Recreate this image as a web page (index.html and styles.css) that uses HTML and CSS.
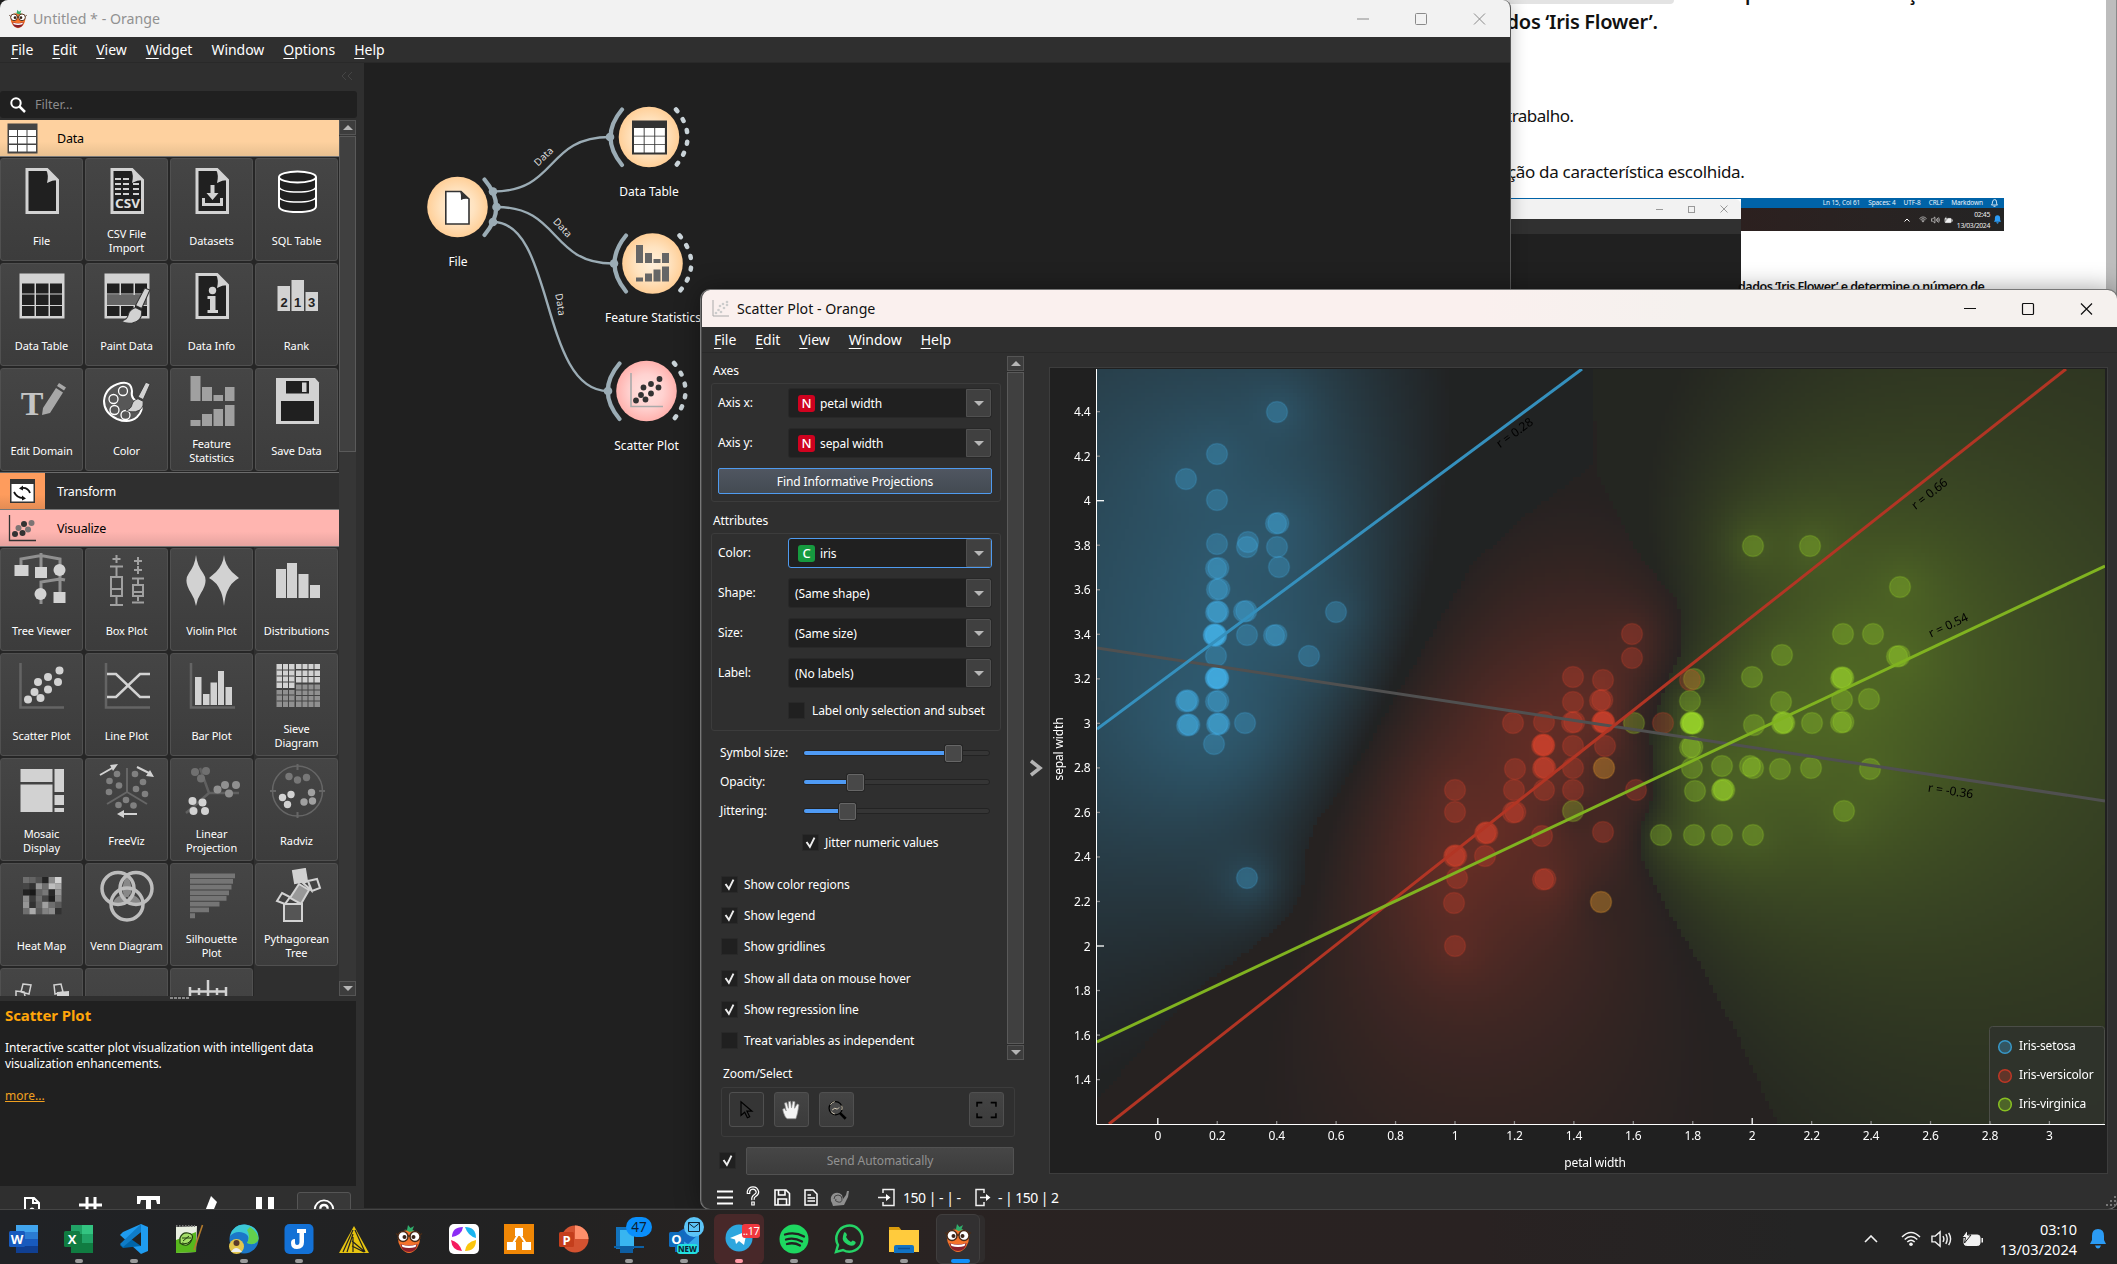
FILE: index.html
```html
<!DOCTYPE html>
<html lang="en">
<head>
<meta charset="utf-8">
<title>Orange</title>
<link rel="stylesheet" href="styles.css">
</head>
<body>
<svg class="defs" width="0" height="0">
  <defs>
    <radialGradient id="gOrange"><stop offset="0" stop-color="#fff0dc"/><stop offset=".55" stop-color="#ffe3c0"/><stop offset="1" stop-color="#ffcf98"/></radialGradient>
    <radialGradient id="gPink"><stop offset="0" stop-color="#ffe2e0"/><stop offset=".55" stop-color="#ffd2d0"/><stop offset="1" stop-color="#ffb2ae"/></radialGradient>
  </defs>
  <symbol id="logo" viewBox="0 0 30 30">
    <path d="M5 9Q15 3 25 9Q28 16 23 24Q15 34 7 24Q2 16 5 9Z" fill="#f4722b"/>
    <path d="M10 5l3 1 1-5 2.500 3 3.500-2-1.500 4 2 1-5 1z" fill="#2fae6b"/>
    <circle cx="9" cy="12.500" r="5" fill="#fff" stroke="#4a2c18" stroke-width="1.400"/><circle cx="21" cy="12.500" r="5" fill="#fff" stroke="#4a2c18" stroke-width="1.400"/>
    <path d="M2 9.500l2 1.500M28 9.500l-2 1.500M13.500 12h3" stroke="#4a2c18" stroke-width="1.400"/>
    <circle cx="10.500" cy="13" r="2" fill="#3a2418"/><circle cx="19.500" cy="13" r="2" fill="#3a2418"/>
    <path d="M6.500 20Q15 22.500 23.500 20Q22 28 15 28Q8 28 6.500 20Z" fill="#8c1f2a"/><path d="M7.500 20.600Q15 23 22.500 20.600L21.500 23Q15 25 8.500 23Z" fill="#fff"/>
  </symbol>
  <symbol id="page" viewBox="0 0 56 56"><path d="M13 6.500H33L43.500 17V49.500H13Z" fill="#202020" stroke="#d2d2d2" stroke-width="3"/><path d="M32 6L44 17Q38 17 33 20Q35 12 32 6Z" fill="#d2d2d2"/></symbol>
  <symbol id="grid" viewBox="0 0 56 56"><path d="M5.500 5.500H50.500V50.500H5.500Z" fill="#d2d2d2"/><path d="M8 15.500h12.500v10H8zM22 15.500h12.500v10H22zM36 15.500h12v10H36zM8 26.500h12.500v10.500H8zM22 26.500h12.500v10.500H22zM36 26.500h12v10.500H36zM8 38h12.500v10H8zM22 38h12.500v10H22zM36 38h12v10H36z" fill="#202020"/></symbol>
  <symbol id="brush" viewBox="0 0 30 36"><path d="M24 1l5 2-8 18-6-3z" fill="#d2d2d2" stroke="#333"/><path d="M15 20l6 3Q22 33 12 35Q5 36 1 33Q7 32 8 27Q9 22 15 20Z" fill="#d2d2d2" stroke="#333"/></symbol>
  <symbol id="chk" viewBox="0 0 17 17"><path d="M4 8l3.800 5.500L13 3" fill="none" stroke="#ededed" stroke-width="2.200"/></symbol>
  <symbol id="bell" viewBox="0 0 16 20"><path d="M8 0Q14 0 14 7V11L16 15H0L2 11V7Q2 0 8 0Z" fill="#2b9bf4"/><path d="M5 16.500h6Q10 19.500 8 19.500T5 16.500Z" fill="#2b9bf4"/></symbol>
  <symbol id="wifi" viewBox="0 0 20 16"><g fill="none" stroke="#f2f2f2" stroke-width="1.500"><path d="M1 6Q10-3 19 6M3.700 8.500Q10 2.500 16.300 8.500M6.300 11Q10 7.500 13.700 11"/></g><circle cx="10" cy="13.300" r="1.800" fill="#f2f2f2"/></symbol>
  <symbol id="vol" viewBox="0 0 22 18"><g fill="none" stroke="#f2f2f2" stroke-width="1.500"><path d="M1 6h3.500l5-4.500v15l-5-4.500H1zM12.500 6Q14.500 9 12.500 12M15.500 4Q18.500 9 15.500 14M18.500 2.500Q22.500 9 18.500 15.500"/></g></symbol>
  <symbol id="batt" viewBox="0 0 22 18"><rect x="2" y="5" width="16" height="10.500" rx="2.500" fill="#f2f2f2" stroke="#f2f2f2"/><path d="M19.500 8h1.500v4.500h-1.500" fill="#f2f2f2"/><path d="M5.500 0L0 7.500h3.500L2.500 13L9 5H5.500z" fill="#f2f2f2" stroke="#222"/></symbol>
</svg>

<div class="desktop">
  <!-- browser page behind the windows -->
  <section class="doc">
    <div class="doc-page">
      <p class="cut"><span class="pill"></span><b>p</b><b>ç</b></p>
      <p class="h">dados ‘Iris Flower’.</p>
      <p class="t1">trabalho.</p>
      <p class="t2">ção da característica escolhida.</p>
      <div class="shot">
        <div class="mini">
          <div class="mini-title"><i class="m-min"></i><i class="m-max"></i><svg width="8" height="8" viewBox="0 0 8 8"><path d="M.5.5l7 7M7.500.5l-7 7" stroke="#999"/></svg></div>
          <div class="mini-menu"></div>
          <div class="mini-body"></div>
        </div>
        <div class="mini-vs"><span>Ln 15, Col 61</span><span>Spaces: 4</span><span>UTF-8</span><span>CRLF</span><span>Markdown</span><svg width="7" height="8" viewBox="0 0 7 8"><path d="M.5 6Q1.500 5 1.500 3T3.500.6T5.500 3T6.500 6ZM2.500 7.300h2" fill="none" stroke="#fff" stroke-width=".8"/></svg></div>
        <div class="mini-bar"><svg width="6" height="4" viewBox="0 0 6 4"><path d="M.5 3.500L3 1l2.500 2.500" fill="none" stroke="#fff"/></svg><svg class="mw" width="8" height="7"><use href="#wifi"/></svg><svg width="9" height="8"><use href="#vol"/></svg><svg width="9" height="8"><use href="#batt"/></svg><span>02:45<br>13/03/2024</span><svg width="7" height="9"><use href="#bell"/></svg></div>
      </div>
      <p class="t3">dados ‘Iris Flower’ e determine o número de</p>
    </div>
    <div class="doc-scroll"></div>
  </section>

  <!-- main Orange window -->
  <section class="win main">
    <header class="title"><svg width="20" height="20"><use href="#logo"/></svg><span>Untitled * - Orange</span>
      <svg class="wctl" width="130" height="14" viewBox="0 0 130 14"><path d="M1 7h12M118 1.500l11 11M129 1.500l-11 11" stroke="#8a8a8a" fill="none"/><rect x="59.500" y="1.500" width="11" height="11" rx="1" fill="none" stroke="#8a8a8a"/></svg></header>
    <nav class="menu"><span><u>F</u>ile</span><span><u>E</u>dit</span><span><u>V</u>iew</span><span><u>W</u>idget</span><span>Window</span><span><u>O</u>ptions</span><span><u>H</u>elp</span></nav>
    <div class="work">
      <aside class="side">
        <div class="collapse"><svg width="12" height="8" viewBox="0 0 12 8"><path d="M5 0L1 4l4 4M11 0L7 4l4 4" fill="none" stroke="#454545"/></svg></div>
        <div class="filter"><svg width="16" height="16" viewBox="0 0 16 16"><circle cx="6" cy="6" r="4.700" fill="none" stroke="#fff" stroke-width="2"/><path d="M9.500 9.500l5.500 5.500" stroke="#fff" stroke-width="2.500"/></svg><span>Filter...</span></div>
        <div class="box">
          <div class="list">
            <div class="cat data"><svg width="31" height="31" viewBox="0 0 31 31"><path d="M.5.5h30v30H.5z" fill="#444"/><path d="M2 7h8v6H2zM11 7h8.500v6H11zM20.500 7h8.500v6h-8.500zM2 14h8v6.500H2zM11 14h8.500v6.500H11zM20.500 14h8.500v6.500h-8.500zM2 22h8v6.500H2zM11 22h8.500v6.500H11zM20.500 22h8.500v6.500h-8.500z" fill="#fff"/></svg><span>Data</span></div>
            <div class="tiles">
              <div class="tile"><svg><use href="#page"/></svg><p>File</p></div>
              <div class="tile"><svg viewBox="0 0 56 56"><use href="#page"/><path d="M16 16h6M24 16h6M34 16h6M16 21h6M24 21h6M34 21h6M16 26h6M24 26h6M34 26h6M16 31h6M24 31h6M34 31h6" stroke="#d2d2d2" stroke-width="2"/><text x="28.500" y="45" class="ic-t" font-size="12" textLength="25" lengthAdjust="spacingAndGlyphs">CSV</text></svg><p>CSV File<br>Import</p></div>
              <div class="tile"><svg viewBox="0 0 56 56"><use href="#page"/><path d="M26.500 22h4v8h4L28.500 37 22.500 30h4zM18 35h3v5h15v-5h3v8H18z" fill="#d2d2d2"/></svg><p>Datasets</p></div>
              <div class="tile"><svg viewBox="0 0 56 56"><path d="M10 14V43Q10 49 28.500 49T47 43V14" fill="#202020" stroke="#fff" stroke-width="2"/><ellipse cx="28.500" cy="14" rx="18.500" ry="5.500" fill="#202020" stroke="#fff" stroke-width="2"/><path d="M10 24Q12 29 28.500 29T47 24M10 34Q12 39 28.500 39T47 34" fill="none" stroke="#fff" stroke-width="1.500"/></svg><p>SQL Table</p></div>
              <div class="tile"><svg><use href="#grid"/></svg><p>Data Table</p></div>
              <div class="tile"><svg viewBox="0 0 56 56"><use href="#grid"/><path d="M8 27h40v10H8z" fill="#666"/><use href="#brush" x="21" y="19" width="31" height="37"/></svg><p>Paint Data</p></div>
              <div class="tile"><svg viewBox="0 0 56 56"><use href="#page"/><circle cx="28.500" cy="22.500" r="3.700" fill="#d2d2d2"/><path d="M23.500 28h8v14h2.500v3H23.500v-3h2.500V31h-2.500z" fill="#d2d2d2"/></svg><p>Data Info</p></div>
              <div class="tile"><svg viewBox="0 0 56 56"><path d="M8.500 18h12.500v25H8.500zM22.500 12h12.500v31H22.500zM36.500 24h12.500v19H36.500z" fill="#d2d2d2"/><g class="rk"><text x="15" y="39">2</text><text x="28.500" y="39">1</text><text x="42.500" y="39">3</text></g></svg><p>Rank</p></div>
              <div class="tile"><svg viewBox="0 0 56 56"><text x="18" y="42" class="ic-s" font-size="34">T</text><path d="M29 35L42 15l7 4.500L36 40l-8 2zM43 13l2-3 7 4.500-2 3z" fill="#a8a8a8"/></svg><p>Edit Domain</p></div>
              <div class="tile"><svg viewBox="0 0 56 56"><path d="M22 10Q32 8 33 18Q31 27 42 30Q45 37 38 44Q30 51 18 46Q5 40 5 28Q6 14 22 10Z" fill="#575757" stroke="#fff" stroke-width="2"/><g fill="none" stroke="#fff" stroke-width="1.300"><circle cx="24" cy="18" r="4.500"/><circle cx="14.500" cy="26" r="4.500"/><circle cx="15.500" cy="37" r="4.500"/><circle cx="26.500" cy="42" r="4.500"/></g><use href="#brush" x="26" y="7" width="26" height="34"/></svg><p>Color</p></div>
              <div class="tile"><svg viewBox="0 0 56 56"><path d="M6.500 3h10v25h-10zM18 14h10v14H18zM29.500 22h9.500v6h-9.500zM41 14h9.500v14H41zM6.500 47h10v6h-10zM18 41h10v12H18zM29.500 36h9.500v17h-9.500zM41 32h9.500v21H41z" fill="#a0a0a0"/></svg><p>Feature<br>Statistics</p></div>
              <div class="tile"><svg viewBox="0 0 56 56"><path d="M7 5H46L50 9.500V51H7Z" fill="#d2d2d2"/><path d="M17 8h23v12.500H17zM12 28h33v20H12z" fill="#202020"/><path d="M33 9.500h4.500v9.500H33z" fill="#d2d2d2"/></svg><p>Save Data</p></div>
            </div>
            <div class="cat trans"><i><svg width="25" height="24" viewBox="0 0 25 24"><path d="M0 0h25v24H0z" fill="#333"/><path d="M1.500 5h22v17.500h-22z" fill="#fff"/><path d="M4 13q3 6 9 6M20 14q-2-6-9-5" fill="none" stroke="#111" stroke-width="1.800"/><path d="M13 6.500v5L9 9.500zM12 16.500v5l4-2z" fill="#111"/></svg></i><span>Transform</span></div>
            <div class="cat vis"><svg width="28" height="28" viewBox="0 0 28 28"><path d="M1.500 1v25.500H28" fill="none" stroke="#333" stroke-width="1.300"/><g fill="#333"><circle cx="7" cy="20" r="3"/><circle cx="14.500" cy="19" r="3"/><circle cx="16" cy="10" r="3"/></g><g fill="#7d7474"><circle cx="10.500" cy="14" r="3"/><circle cx="20" cy="15.500" r="3"/><circle cx="23.500" cy="9" r="3"/></g></svg><span>Visualize</span></div>
            <div class="tiles b">
              <div class="tile"><svg viewBox="0 0 56 56"><path d="M7 14V6L27 2.500 46 6V47M27 0V20M27 51V29L46 26l5 1" fill="none" stroke="#909090" stroke-width="3"/><path d="M.5 12h14v11H.5zM21 14h12v11H21zM39.500 39h12v11h-12z" fill="#d2d2d2"/><circle cx="45.500" cy="17" r="6" fill="#d2d2d2"/><circle cx="26.500" cy="41" r="6" fill="#d2d2d2"/></svg><p>Tree Viewer</p></div>
              <div class="tile"><svg viewBox="0 0 56 56"><g fill="none" stroke="#a0a0a0" stroke-width="2"><path d="M17.500 2v8M13.500 6h8M39 4v8M35 8h8M39 13v8M35 17h8M11 13.500h13M17.500 14v10M12 24h11v19H12zM12 36h11M17.500 43v8M11 52h13M33 25.500h12M39 26v6M34 32h10v11H34zM34 39h10M39 43v5M33 49.500h12"/></g></svg><p>Box Plot</p></div>
              <div class="tile"><svg viewBox="0 0 56 56"><path d="M12 2Q13 12 19 20Q25 28 17 40Q13 46 12 53Q11 46 7 40Q-1 28 5 20Q11 12 12 2ZM40 2Q41 12 48 19L55 25Q47 29 43 39Q41 44 40 53Q39 44 37 39Q33 29 25 25L32 19Q39 12 40 2Z" fill="#d2d2d2"/></svg><p>Violin Plot</p></div>
              <div class="tile"><svg viewBox="0 0 56 56"><path d="M7 16h10v29H7zM18 10h10v35H18zM29.500 21h10v24h-10zM41 32h10v13H41z" fill="#d2d2d2"/></svg><p>Distributions</p></div>
              <div class="tile"><svg viewBox="0 0 56 56"><path d="M6.500 5v44.500H50" fill="none" stroke="#646464" stroke-width="2.500"/><g fill="#d2d2d2"><circle cx="14" cy="41.500" r="4"/><circle cx="20.500" cy="34" r="4"/><circle cx="26.500" cy="40" r="4"/><circle cx="24" cy="24" r="4"/><circle cx="34" cy="31.500" r="4"/><circle cx="34" cy="19" r="4"/><circle cx="44" cy="24" r="4"/><circle cx="45.500" cy="12.500" r="4"/></g></svg><p>Scatter Plot</p></div>
              <div class="tile"><svg viewBox="0 0 56 56"><path d="M7 5v44.500H51" fill="none" stroke="#646464" stroke-width="2.500"/><path d="M8 16h9L41 39h10M8 39h9L41 16h10" fill="none" stroke="#d2d2d2" stroke-width="2.500"/></svg><p>Line Plot</p></div>
              <div class="tile"><svg viewBox="0 0 56 56"><path d="M7 5v44.500H51" fill="none" stroke="#646464" stroke-width="2.500"/><path d="M11 19h6.500v28H11zM19 36h6.500v11H19zM26.500 24.500H33v22.500h-6.500zM34 13h6v34h-6zM41.500 29H48v18h-6.500z" fill="#d2d2d2"/></svg><p>Bar Plot</p></div>
              <div class="tile"><svg viewBox="0 0 56 56"><path d="M7.500 6h18v24h-18zM27 6h24v5H27zM27 12.500h24v12H27z" fill="#d2d2d2"/><path d="M7.500 32h18v17h-18zM27 26.500h24v22.500H27z" fill="#909090"/><path d="M13.500 6v43M19.500 6v43M33 6v43M39 6v43M45 6v43M7.500 12h18M7.500 18h18M7.500 24h18M7.500 37h18M7.500 43h18M27 18.500h24M27 32h24M27 37.500h24M27 43h24" stroke="#444"/></svg><p>Sieve<br>Diagram</p></div>
              <div class="tile"><svg viewBox="0 0 56 56"><path d="M6.500 6h32v13h-32zM6.500 21.500h32V49h-32zM40.500 6H50v23h-9.500zM40.500 32H50v10h-9.500zM40.500 45H50v4h-9.500z" fill="#d2d2d2"/></svg><p>Mosaic<br>Display</p></div>
              <div class="tile"><svg viewBox="0 0 56 56"><path d="M28 5v24L8 41M28 29l20 12" fill="none" stroke="#666" stroke-width="2"/><g fill="#808080"><circle cx="18" cy="11" r="3.300"/><circle cx="10.500" cy="18" r="3.300"/><circle cx="20" cy="22.500" r="3.300"/><circle cx="10" cy="29" r="3.300"/><circle cx="36" cy="11" r="3.300"/><circle cx="44" cy="19" r="3.300"/><circle cx="37" cy="26" r="3.300"/><circle cx="46" cy="31" r="3.300"/><circle cx="27" cy="37" r="3.300"/><circle cx="19.500" cy="42" r="3.300"/><circle cx="34.500" cy="42.500" r="3.300"/></g><path d="M1 12L15 4M38 4l14 7M38 51H22" stroke="#d2d2d2" stroke-width="2"/><path d="M11 2l8-1-5 7zM55 14l-8-1 4-6zM18 51l7-4v8z" fill="#d2d2d2"/></svg><p>FreeViz</p></div>
              <div class="tile"><svg viewBox="0 0 56 56"><path d="M16 5l9 25h30M25 30L2 50" fill="none" stroke="#606060" stroke-width="2.500"/><g fill="#707070"><circle cx="11" cy="9" r="4"/><circle cx="22" cy="8" r="4"/><circle cx="17" cy="15.500" r="4"/></g><g fill="#909090"><circle cx="33.500" cy="26.500" r="4"/><circle cx="41" cy="22" r="4"/><circle cx="52" cy="22" r="4"/><circle cx="45" cy="30.500" r="4"/></g><g fill="#d2d2d2"><circle cx="8.500" cy="38" r="4"/><circle cx="18.500" cy="39.500" r="4"/><circle cx="9.500" cy="48" r="4"/><circle cx="21" cy="48" r="4"/></g></svg><p>Linear<br>Projection</p></div>
              <div class="tile"><svg viewBox="0 0 56 56"><circle cx="28.500" cy="28" r="25" fill="none" stroke="#666" stroke-width="1.500"/><path d="M28.500 1v6M28.500 49v6M1 28h6M50 28h6" stroke="#666" stroke-width="2"/><g fill="#777"><circle cx="20" cy="13.500" r="3.700"/><circle cx="28.500" cy="17" r="3.700"/><circle cx="37.500" cy="14.500" r="3.700"/></g><g fill="#a0a0a0"><circle cx="42.500" cy="29.500" r="3.700"/><circle cx="35" cy="39" r="3.700"/><circle cx="43.500" cy="38" r="3.700"/></g><g fill="#d2d2d2"><circle cx="13.500" cy="34.500" r="3.700"/><circle cx="22" cy="31.500" r="3.700"/><circle cx="18.500" cy="41.500" r="3.700"/></g></svg><p>Radviz</p></div>
              <div class="tile"><svg viewBox="0 0 56 56" id="heat"></svg><p>Heat Map</p></div>
              <div class="tile"><svg viewBox="0 0 56 56"><path d="M28 8q7 10 3 20q-3 2-6 0q-4-10 3-20zM14 34q3-6 11-8q4 5 2 10q-7 3-13-2zM42 34q-3-6-11-8q-4 5-2 10q7 3 13-2z" fill="#888"/><g fill="none" stroke="#bdbdbd" stroke-width="3.500"><circle cx="19" cy="20.500" r="16"/><circle cx="37" cy="20.500" r="16"/><circle cx="28" cy="36" r="16"/></g></svg><p>Venn Diagram</p></div>
              <div class="tile"><svg viewBox="0 0 56 56"><path d="M6 5.500h45v4.800H6zM6 11h43v4.800H6zM6 16.700h41.500v4.800H6zM6 22.400h39v4.800H6zM6 28h36.500v4.800H6zM6 33.800h29.500v4.800H6zM6 39.500h19v4.800H6zM6 45.200h5v5H6z" fill="#757575"/></svg><p>Silhouette<br>Plot</p></div>
              <div class="tile"><svg viewBox="0 0 56 56"><g stroke="#d2d2d2" stroke-width="2"><path d="M15 36h18v17H15z" fill="#555"/><path d="M30 16l10 6-8 14-11-6z" fill="#999"/><path d="M24 3l12-2 2 12-12 2z" fill="#d2d2d2"/><g fill="none"><path d="M13 25l8 4-5 7-8-3zM39 13l9-2 3 9-8 3zM34 15l5-2 3 9z"/></g></g></svg><p>Pythagorean<br>Tree</p></div>
              <div class="tile"><svg viewBox="0 0 56 56"><g fill="none" stroke="#d2d2d2" stroke-width="1.500"><path d="M9 11l8 1-2 9-8-2zM2 27v-9l8 1 2 8M40 12l7-1 2 8-8 2z"/></g><path d="M43 19l12-1v10H43z" fill="#d2d2d2"/></svg></div>
              <div class="tile"></div>
              <div class="tile"><svg viewBox="0 0 56 56"><path d="M24 7v20M6 14v12M42 14v12M6 18.500h36M15 15v7M33 15v7" stroke="#d2d2d2" stroke-width="2.500" fill="none"/></svg></div>
            </div>
          </div>
          <div class="sb"><i class="up"></i><div class="track"><div class="thumb"></div></div><i class="dn"></i></div>
        </div>
        <div class="split"><i></i></div>
        <div class="info"><h3>Scatter Plot</h3><p>Interactive scatter plot visualization with intelligent data<br>visualization enhancements.</p><a>more...</a></div>
        <div class="tools">
          <svg viewBox="0 0 54 26"><path d="M21 8h9l5 5v15H21zM29 8v5h6" fill="none" stroke="#fff" stroke-width="2"/><circle cx="28" cy="20" r="2.500" fill="#fff"/></svg>
          <svg viewBox="0 0 54 26"><path d="M24 7v20M32 7v20M16 15h23" stroke="#fff" stroke-width="3"/></svg>
          <svg viewBox="0 0 54 26"><path d="M16 6h23v8h-3l-1-4h-5v20h-5V10h-5l-1 4h-3z" fill="#fff"/></svg>
          <svg viewBox="0 0 54 26"><path d="M24 24L31 6l6 6-6 14z" fill="#fff"/></svg>
          <svg viewBox="0 0 54 26"><path d="M18 7h6v20H18zM30 7h6v20h-6z" fill="#fff"/></svg>
          <svg class="on" viewBox="0 0 54 26"><circle cx="27" cy="18" r="10" fill="none" stroke="#fff" stroke-width="2"/><path d="M23 17q0-4 4-4t4 4" fill="none" stroke="#fff" stroke-width="2.500"/></svg>
        </div>
      </aside>
      <svg class="flow" width="1146" height="1145" viewBox="364 63 1146 1145">
        <g fill="none" stroke="#9bacb5" stroke-width="2.400"><path d="M493 191.500C558 191.500 545 137 610 137M497 207C560 207 550 263.500 613 263.500M493 222C555 222 540 391 608 391"/></g>
        <g fill="none" stroke="#9bacb5" stroke-width="4.200" stroke-linecap="round"><path d="M484.500 179.500Q508 207 484.500 235M622 109.500Q599 137 622 165M626 235.500Q603 263.500 626 291.500M619.500 363.500Q596 391 619.500 419"/></g>
        <g fill="none" stroke="#c9d3d8" stroke-width="4.500" stroke-linecap="round" stroke-dasharray="2 9.700"><path d="M676 109.500Q699 137 676 165.500M679.500 235.500Q703 263.500 679.500 291.500M674 363Q697 391 674 419"/></g>
        <g fill="#9bacb5"><circle cx="493" cy="191.500" r="4.300"/><circle cx="496.500" cy="207" r="4.300"/><circle cx="493" cy="222" r="4.300"/><circle cx="610" cy="137" r="4.300"/><circle cx="614" cy="263.500" r="4.300"/><circle cx="608" cy="391" r="4.300"/></g>
        <circle cx="457.500" cy="207" r="30.300" fill="url(#gOrange)"/><circle cx="649" cy="137" r="30.300" fill="url(#gOrange)"/><circle cx="652.500" cy="263.500" r="30.300" fill="url(#gOrange)"/><circle cx="646.500" cy="391" r="30.300" fill="url(#gPink)"/>
        <path d="M445.800 191.500H461L469 199V224H445.800Z" fill="#fff" stroke="#333" stroke-width="1.600"/><path d="M460 191L469.500 199Q464 198 461 200Q461.500 195 460 191Z" fill="#333"/>
        <path d="M632 120.500h35v34h-35z" fill="#333"/><path d="M634 128h9.700v7.700h-9.700zM644.600 128h9.700v7.700h-9.700zM655.200 128h9.700v7.700h-9.700zM634 136.500h9.700v7.700h-9.700zM644.600 136.500h9.700v7.700h-9.700zM655.200 136.500h9.700v7.700h-9.700zM634 145h9.700v7.500h-9.700zM644.600 145h9.700v7.500h-9.700zM655.200 145h9.700v7.500h-9.700z" fill="#fff"/>
        <path d="M636 245h7v18h-7zM645 253h7v10h-7zM653.500 259h7v4h-7zM662 253h7v10h-7zM636 277.500h7v4h-7zM645 273.500h7v8h-7zM653.500 269.500h7v12h-7zM662 266.500h7v15h-7z" fill="#666"/>
        <path d="M631 373v33.500H663" fill="none" stroke="#aaa" stroke-width="1.600"/><g fill="#333"><circle cx="636" cy="400.500" r="2.900"/><circle cx="641" cy="395" r="2.900"/><circle cx="645.500" cy="399.500" r="2.900"/><circle cx="643.500" cy="387.500" r="2.900"/><circle cx="651" cy="393.500" r="2.900"/><circle cx="651" cy="384" r="2.900"/><circle cx="658.500" cy="387.500" r="2.900"/><circle cx="659.500" cy="379" r="2.900"/></g>
        <g class="nl"><text x="458" y="266">File</text><text x="649" y="196">Data Table</text><text x="653" y="322">Feature Statistics</text><text x="646.500" y="450">Scatter Plot</text></g>
        <g class="ll"><text transform="translate(546 159) rotate(-44)">Data</text><text transform="translate(560 230) rotate(47)">Data</text><text transform="translate(557 305) rotate(81)">Data</text></g>
      </svg>
    </div>
  </section>

  <!-- scatter plot window -->
  <section class="win scatter">
    <header class="title"><svg width="17" height="17" viewBox="0 0 17 17"><path d="M1 0v16h16" fill="none" stroke="#aaa"/><g fill="#ccc"><circle cx="4" cy="13" r="1.300"/><circle cx="6.500" cy="10" r="1.300"/><circle cx="9" cy="12" r="1.300"/><circle cx="8" cy="6" r="1.300"/><circle cx="12" cy="8" r="1.300"/><circle cx="11" cy="4" r="1.300"/><circle cx="15" cy="5" r="1.300"/><circle cx="15" cy="2" r="1.300"/></g></svg><span>Scatter Plot - Orange</span>
      <svg class="wctl" width="130" height="14" viewBox="0 0 130 14"><path d="M1 6.500h12M118 1.500l11 11M129 1.500l-11 11" stroke="#111" stroke-width="1.200" fill="none"/><rect x="59.500" y="1.500" width="11" height="11" rx="1" fill="none" stroke="#111" stroke-width="1.200"/></svg></header>
    <nav class="menu"><span><u>F</u>ile</span><span><u>E</u>dit</span><span><u>V</u>iew</span><span><u>W</u>indow</span><span><u>H</u>elp</span></nav>
    <div class="body">
      <div class="controls">
        <div class="upper">
          <div class="form">
            <h4>Axes</h4>
            <div class="group g1">
              <div class="row"><label>Axis x:</label><div class="combo"><b class="n">N</b><span>petal width</span><i></i></div></div>
              <div class="row"><label>Axis y:</label><div class="combo"><b class="n">N</b><span>sepal width</span><i></i></div></div>
              <div class="btn focus">Find Informative Projections</div>
            </div>
            <h4 class="h2">Attributes</h4>
            <div class="group g2">
              <div class="row"><label>Color:</label><div class="combo focus"><b class="c">C</b><span>iris</span><i></i></div></div>
              <div class="row"><label>Shape:</label><div class="combo"><span>(Same shape)</span><i></i></div></div>
              <div class="row"><label>Size:</label><div class="combo"><span>(Same size)</span><i></i></div></div>
              <div class="row"><label>Label:</label><div class="combo"><span>(No labels)</span><i></i></div></div>
              <div class="ck sub"><i></i><span>Label only selection and subset</span></div>
            </div>
            <div class="sliders">
              <div class="sl"><label>Symbol size:</label><div class="bar"><div class="fill" style="width:81%"></div></div></div>
              <div class="sl"><label>Opacity:</label><div class="bar"><div class="fill" style="width:28%"></div></div></div>
              <div class="sl"><label>Jittering:</label><div class="bar"><div class="fill" style="width:24%"></div></div></div>
              <div class="ck jit"><i><svg><use href="#chk"/></svg></i><span>Jitter numeric values</span></div>
            </div>
            <div class="checks">
              <div class="ck"><i><svg><use href="#chk"/></svg></i><span>Show color regions</span></div>
              <div class="ck"><i><svg><use href="#chk"/></svg></i><span>Show legend</span></div>
              <div class="ck"><i></i><span>Show gridlines</span></div>
              <div class="ck"><i><svg><use href="#chk"/></svg></i><span>Show all data on mouse hover</span></div>
              <div class="ck"><i><svg><use href="#chk"/></svg></i><span>Show regression line</span></div>
              <div class="ck"><i></i><span>Treat variables as independent</span></div>
            </div>
          </div>
          <div class="sb"><i class="up"></i><div class="track"><div class="thumb"></div></div><i class="dn"></i></div>
        </div>
        <h4 class="h3">Zoom/Select</h4>
        <div class="zoom">
          <div class="zb dark"><svg viewBox="0 0 20 24"><path d="M4 3v15l4-3.500 3 6 2.500-1.200-3-6h5.500z" fill="none" stroke="#000" stroke-width="1.300"/></svg></div>
          <div class="zb"><svg viewBox="0 0 24 24"><path d="M5 20Q2 14 2 11L4 10L6 13L4 4L6.500 3.500L8.500 10L8.500 2.500L11 2L12 9.500L13.500 2L16 2.500L15.500 10L18.500 5L20.500 6L19 15Q18 19 17 22H7Z" fill="#f4f4f4" stroke="#888" stroke-width=".8"/></svg></div>
          <div class="zb"><svg viewBox="0 0 24 24"><circle cx="11" cy="10" r="7.500" fill="#4a4a4a" stroke="#000" stroke-width="1.400"/><path d="M5 6q2-3 5-3.500M18 7q1 3 0 5M6 14q2 2 4 2.500M7 12l3-2 3 1 2-2" fill="none" stroke="#d8cfb8" stroke-width="1.100"/><path d="M16 15.500l6.500 6.500" stroke="#000" stroke-width="3"/></svg></div>
          <div class="zb last"><svg viewBox="0 0 20 20"><path d="M1 7V3h5M14 3h5v4M19 13v4h-5M6 17H1v-4" fill="none" stroke="#000" stroke-width="1.500"/></svg></div>
        </div>
        <div class="send"><div class="ck"><i><svg><use href="#chk"/></svg></i></div><div class="btn off">Send Automatically</div></div>
        <div class="status">
          <svg width="346" height="24" viewBox="715 1186 346 24">
            <path d="M717 1192.500h16M717 1198.500h16M717 1204.500h16" stroke="#fff" stroke-width="2"/>
            <path d="M748.500 1195v-2.500q1-3.500 4.500-3.500t4.500 4q0 2-2.500 3.500t-2 4.500M753 1202.500v4" fill="none" stroke="#fff" stroke-width="3.600"/><path d="M748.500 1194v-1.500q1-3.500 4.500-3.500t4.500 4q0 2-2.500 3.500t-2 4.500M753 1203.500v2" fill="none" stroke="#333" stroke-width="1.200"/>
            <path d="M775 1191h11l3.500 3.500v11.500h-14.500zM778.500 1191v5h6.500v-5M778 1206v-6h8.500v6" fill="none" stroke="#fff" stroke-width="1.600"/>
            <path d="M805 1191h8l4 4v11h-12zM807.500 1196h3.500M807.500 1199h7.500M807.500 1202h7.500" fill="none" stroke="#fff" stroke-width="1.500"/>
            <path d="M832 1204q-3-5 1-9 5-3 9 1l1 4 3-4 1-4h2l-1 6-4 8-11 1z" fill="#8f8f8f"/><path d="M834 1200q0-4 4-4t4 4-4 3-2-3" fill="none" stroke="#444"/>
            <path d="M883 1194v-3.500h11v16h-11v-3.500M878 1198.500h9M984 1194v-3.500h-8v16h8v-3.500M980 1198.500h9" fill="none" stroke="#f0f0f0" stroke-width="1.500"/><path d="M886 1195l4.500 3.500-4.500 3.500zM986 1195l4.500 3.500-4.500 3.500z" fill="#fff"/>
            <text x="903" y="1203.500" textLength="58">150 | - | -</text><text x="998" y="1203.500" textLength="61">- | 150 | 2</text>
          </svg>
        </div>
      </div>
      <div class="handle"><svg width="13" height="18" viewBox="0 0 13 18"><path d="M1 2l9 7-9 7" fill="none" stroke="#b4b4b4" stroke-width="3.500"/></svg></div>
      <div class="plot">
        <canvas id="density" width="1008" height="755"></canvas>
        <svg id="chart" width="1057" height="805" viewBox="1050 368 1057 805"></svg>
      </div>
    </div>
    <svg class="grip" width="14" height="14" viewBox="0 0 14 14"><path d="M11 1h2v2h-2zM7 5h2v2H7zM11 5h2v2h-2zM3 9h2v2H3zM7 9h2v2H7zM11 9h2v2h-2z" fill="#777"/></svg>
  </section>

  <footer class="taskbar">
    <div class="apps">
      <div class="app"><svg viewBox="0 0 30 30"><path d="M7 1h22v8H7z" fill="#41a5ee"/><path d="M7 8h22v7H7z" fill="#2b7cd3"/><path d="M7 15h22v7H7z" fill="#185abd"/><path d="M7 22h22v7H7z" fill="#103f91"/><rect y="7" width="16" height="16" rx="1.500" fill="#185abd"/><text x="8" y="20">W</text></svg></div>
      <div class="app run"><svg viewBox="0 0 30 30"><path d="M7 1h22v28H7z" fill="#21a366"/><path d="M18 1h11v9H18z" fill="#33c481"/><path d="M7 10h11v9H7zM7 19h22v10H7z" fill="#107c41"/><rect y="7" width="16" height="16" rx="1.500" fill="#107c41"/><text x="8" y="20">X</text></svg></div>
      <div class="app run"><svg viewBox="0 0 30 30"><path d="M22 0l7 3v24l-7 3L1 11l3-3z" fill="#1f9cf0"/><path d="M22 8v14L4 24l-3-3z" fill="#0065a9"/><path d="M22 8L12 15l10 7z" fill="#222"/><path d="M1 20L22 0v8L4 23z" fill="#0f7cc8"/></svg></div>
      <div class="app"><svg viewBox="0 0 30 30"><path d="M2 3l21-1-1 26-20 1z" fill="#e8efe0"/><path d="M2 16l20-8v20L2 29z" fill="#58b81d"/><path d="M2 2h19" stroke="#777" stroke-width="2" stroke-dasharray="1.500 1.500"/><path d="M6 14q2-6 8-5t4 6-5 6-7-2z" fill="#a4de68" stroke="#234010" stroke-width="1.200"/><path d="M8 14h9M9 17l6-5M8 19q6 2 9-3" stroke="#234010" fill="none"/><path d="M28.500 1L20 26" stroke="#b37b2c" stroke-width="1.600"/></svg></div>
      <div class="app run"><svg viewBox="0 0 30 30"><circle cx="15" cy="15" r="14.500" fill="#1b77c8"/><path d="M1 12Q4 0 16 .5Q30 2 29.500 15Q27 22 18 19Q22 12 15 9Q7 6 1 12Z" fill="#3cc8d5"/><path d="M21 3Q31 10 29 17Q24 22 18 19Q22 12 18 6Z" fill="#63d04d"/><circle cx="7.500" cy="22.500" r="7.500" fill="#e3c64d"/><circle cx="7.500" cy="19" r="3" fill="#5b3a2a"/><path d="M2 28q5-8 11 0z" fill="#eee"/></svg></div>
      <div class="app run"><svg viewBox="0 0 30 30"><rect x=".5" width="29" height="30" rx="5" fill="#1371d6"/><path d="M13 5h9v4h-2v9q0 7-7 7-6 0-6-6 0-4 4-4v3q0 3 2 3 2.500 0 2.500-3V9H13z" fill="#fff"/></svg></div>
      <div class="app"><svg viewBox="0 0 30 30"><path d="M15 2L30 29H0Z" fill="#e6c410"/><path d="M14 6L4 28M14 10l-6 18M14 13v15M16 6l10 22M13 17l13 11M13 22l12 6" stroke="#222" stroke-width="1.200"/></svg></div>
      <div class="app"><svg><use href="#logo"/></svg></div>
      <div class="app"><svg viewBox="0 0 30 30"><rect width="30" height="30" rx="5" fill="#fff"/><path d="M3 13q0-10 11-10-1 8-11 10z" fill="#8b2cf5"/><path d="M16 3q11 0 11 11-8-2-11-11z" fill="#18b4f0"/><path d="M2 16q8 2 11 11Q3 27 2 16z" fill="#f5195d"/><path d="M27 16q0 11-11 11 1-9 11-11z" fill="#fbc60d"/></svg></div>
      <div class="app"><svg viewBox="0 0 30 30"><path d="M0 0h30v30H0z" fill="#f08705"/><path d="M15 9L8 21M15 9l8 12" stroke="#fff" stroke-width="2"/><path d="M11 4h8v8h-8zM3 18h9v8H3zM18 18h9v8h-9z" fill="#fff"/></svg></div>
      <div class="app"><svg viewBox="0 0 30 30"><circle cx="16" cy="15" r="13.500" fill="#d35230"/><path d="M16 1.500A13.500 13.500 0 0 1 29.500 15H16z" fill="#ff8f6b"/><rect y="8" width="15" height="15" rx="1.500" fill="#c43e1c"/><text x="7.500" y="20.500">P</text></svg></div>
      <div class="app run"><svg viewBox="0 0 30 30"><path d="M2 3h18v22H2z" fill="#1273bd"/><path d="M6 6h14v18H6z" fill="#38b5f0"/><path d="M0 22h30v2H0z" fill="#0c60a5"/><path d="M6 22h13v7H6z" fill="#0e5da0"/></svg><em class="c47">47</em></div>
      <div class="app run"><svg viewBox="0 0 30 30"><path d="M6 10L19 2l11 8v18H6z" fill="#1469c2"/><path d="M8 13l11 7 11-10v18H8z" fill="#32a6ea"/><rect y="8" width="15" height="15" rx="1.500" fill="#0f6cbd"/><text x="7.500" y="20">O</text></svg><em class="env"><svg viewBox="0 0 12 10"><path d="M.5.5h11v9H.5zM.5 1L6 5.500 11.500 1" fill="none" stroke="#123"/></svg></em><em class="new">NEW</em></div>
      <div class="app run tg"><svg viewBox="0 0 30 30"><circle cx="15" cy="15" r="13.500" fill="#2ea6de"/><path d="M6 15L23 8l-3 14-5-4-3 3-1-4.500z" fill="#fff"/></svg><em class="c17">..17</em></div>
      <div class="app run"><svg viewBox="0 0 30 30"><circle cx="15" cy="15" r="14.500" fill="#1ed760"/><path d="M6 10.500q10-3 19 2M7 15.500q8-2.500 16 2M8 20q7-2 13 1.500" fill="none" stroke="#222" stroke-width="2.300" stroke-linecap="round"/></svg></div>
      <div class="app run"><svg viewBox="0 0 30 30"><path d="M2 28l2-7A13 13 0 1 1 9 26z" fill="none" stroke="#25d366" stroke-width="2.500"/><path d="M10 8.500q2-1 3 2.500l-1 2q2 4 5 5l1.500-1.500q4 1 3 3-2 4-8 1T9 12z" fill="#25d366"/></svg></div>
      <div class="app run"><svg viewBox="0 0 30 30"><path d="M0 3h10l3 4H0z" fill="#d99b0c"/><path d="M0 6h30v22H0z" fill="#ffcb3d"/><path d="M5 29v-6q0-2 2-2h16q2 0 2 2v6z" fill="#1173c4"/><path d="M9 24.500h12" stroke="#0a4f94" stroke-width="1.500"/></svg></div>
      <div class="app run cur"><svg><use href="#logo"/></svg></div>
    </div>
    <div class="tray">
      <svg class="chev" width="14" height="8" viewBox="0 0 14 8"><path d="M1 7l6-6 6 6" fill="none" stroke="#f2f2f2" stroke-width="1.600"/></svg>
      <svg width="20" height="16"><use href="#wifi"/></svg><svg width="21" height="18"><use href="#vol"/></svg><svg width="22" height="18"><use href="#batt"/></svg>
      <div class="clock">03:10<br>13/03/2024</div>
      <svg width="16" height="20"><use href="#bell"/></svg>
    </div>
  </footer>
</div>
<script src="chart.js"></script>
</body>
</html>
```
FILE: styles.css
```css
* { box-sizing: border-box; margin: 0; padding: 0; }
body { width: 2117px; height: 1264px; overflow: hidden; background: #202020; font: 12px/15px "Noto Sans", "Open Sans", sans-serif; color: #fff; }
svg { display: block; flex: none; }
.defs { position: absolute; }
.desktop { position: relative; width: 2117px; height: 1264px; overflow: hidden; }
.desktop p, .desktop span, .btn, label, h3, h4 { white-space: nowrap; }

/* document page */
.doc { position: absolute; left: 1480px; top: 0; width: 637px; height: 300px; display: flex; background: #fff; color: #111; }
.doc-page { width: 626px; height: 300px; overflow: hidden; display: flex; flex-direction: column; }
.doc-scroll { flex: 1; background: #bdbdbd; border-right: 1px solid #888; }
.cut { height: 8px; overflow: hidden; display: flex; font-size: 19px; line-height: 19px; }
.cut b { font-weight: 600; width: 162px; margin-top: -16px; }
.pill { width: 194px; height: 4px; background: #e3e3e3; border-radius: 0 0 6px 0; margin-right: 71px; }
.h { height: 56px; padding-left: 3px; font-size: 20px; line-height: 27px; font-weight: 600; letter-spacing: -.3px; }
.t1 { height: 56px; margin-top: 40px; padding-left: 26px; font-size: 17px; line-height: 24px; letter-spacing: -.5px; }
.t2 { height: 38px; padding-left: 28px; font-size: 17px; line-height: 24px; letter-spacing: -.32px; }
.shot { height: 33px; width: 524px; display: grid; grid-template: 10px 23px / 261px 263px; background: linear-gradient(#0063a8 1px, transparent 1px); }
.mini { grid-row: 1 / 3; height: 102px; padding-top: 1px; }
.mini-title { height: 20px; background: #f2f2f2; border-radius: 0 6px 0 0; display: flex; align-items: center; justify-content: flex-end; gap: 25px; padding-right: 13px; }
.mini-title i { display: block; width: 7px; height: 7px; }
.m-min { height: 1px !important; background: #999; }
.m-max { border: 1px solid #999; }
.mini-menu { height: 15px; background: #303030; }
.mini-body { height: 66px; background: #202020; }
.mini-vs { background: #0063a8; color: #e8f2fa; font-size: 6.500px; line-height: 10px; display: flex; align-items: center; justify-content: flex-end; gap: 8px; padding-right: 6px; letter-spacing: -.1px; }
.mini-bar { background: linear-gradient(90deg, #2c201f, #292322 50%, #242424); color: #eee; font-size: 6.800px; line-height: 11px; display: flex; align-items: center; justify-content: flex-end; gap: 4px; padding-right: 3px; text-align: right; letter-spacing: -.3px; }
.mini-bar .mw { margin-left: 5px; }
.t3 { margin-top: 47px; padding-left: 258px; font-size: 12.500px; line-height: 18px; font-weight: 600; letter-spacing: -.5px; }

/* windows */
.win { position: absolute; overflow: hidden; display: flex; flex-direction: column; background: #2f2f2f; }
.main { left: 0; top: 0; width: 1511px; height: 1209px; border-radius: 8px 8px 0 0; border-right: 1px solid #555; box-shadow: 2px 0 16px rgba(0,0,0,.2); }
.scatter { left: 701px; top: 290px; width: 1416px; height: 919px; border-radius: 9px; border-left: 1px solid #484848; box-shadow: 0 0 0 1px #777, 0 0 26px rgba(0,0,0,.4); }
.title { height: 37px; flex: none; display: flex; align-items: center; font-size: 14.200px; background: #f2f2f2; color: #919191; padding-left: 8px; }
.title span { margin-left: 5px; flex: 1; }
.main .wctl { margin-right: 24px; }
.scatter .title { background: linear-gradient(90deg, #faf0ee 55%, #f5f1ee 70%); color: #111; padding-left: 10px; }
.scatter .title span { margin-left: 8px; }
.scatter .wctl { margin-right: 24px; }
.menu { height: 26px; flex: none; display: flex; font-size: 14px; line-height: 25px; padding-left: 11px; gap: 19px; border-bottom: 1px solid #292929; letter-spacing: -.03px; }
.menu u { text-underline-offset: 3px; text-decoration-thickness: 1px; }
.scatter .menu { padding-left: 12px; line-height: 26px; }

.work { flex: 1; display: flex; min-height: 0; }
.side { width: 364px; display: flex; flex-direction: column; background: #2f2f2f; }
.flow { background: #202020; }
.collapse { height: 28px; padding: 9px 0 0 341px; }
.filter { width: 357px; height: 27px; margin-bottom: 2px; background: #202020; border-radius: 3px; display: flex; align-items: center; gap: 9px; padding-left: 10px; color: #8c8c8c; font-size: 12.500px; }
.box { display: flex; height: 876px; flex: none; }
.list { width: 339px; overflow: hidden; display: flex; flex-direction: column; }
.cat { display: flex; align-items: center; flex: none; width: 339px; letter-spacing: -.2px; font-size: 12.500px; }
.data { height: 37px; background: linear-gradient(#fed19f 60%, #e8c090); border-bottom: 1px solid #7a7a7a; color: #000; padding-left: 7px; gap: 19px; }
.trans { height: 37px; border-top: 1px solid #6b6b6b; gap: 12px; }
.trans i { width: 45px; height: 36px; background: linear-gradient(#fe9c5d 60%, #e48c54); display: grid; place-items: center; }
.vis { height: 38px; background: linear-gradient(#ffb5b0 60%, #e6a39f); color: #000; border-top: 1px solid #777; border-bottom: 1px solid #777; padding-left: 8px; gap: 21px; }
.tiles { display: grid; grid-template-columns: repeat(4, 83px); grid-auto-rows: 103px; gap: 2px; background: #262626; padding: 1px 0; flex: none; }
.tiles.b { background: linear-gradient(90deg, #262626 75%, #2f2f2f 75%); }
.tile { border: 1px solid #505050; border-radius: 3px; background: linear-gradient(#454545, #3c3c3c); display: flex; flex-direction: column; align-items: center; padding-top: 4px; overflow: hidden; }
.tile svg { width: 56px; height: 56px; }
.tile p { height: 42px; display: flex; align-items: center; justify-content: center; text-align: center; font-size: 11px; line-height: 14px; letter-spacing: -.1px; padding-top: 3px; }
.ic-t { font-weight: 700; fill: #e0e0e0; text-anchor: middle; }
.rk { font: 700 13px "Liberation Sans", sans-serif; fill: #222; text-anchor: middle; }
.ic-s { font-family: "Liberation Serif", serif; font-weight: 700; fill: #c4c4c4; text-anchor: middle; }

.sb { width: 17px; display: flex; flex-direction: column; background: #383838; margin-left: 1px; }
.side .sb { margin-left: 0; }
.sb > i { height: 15px; border: 1px solid #555; background: #3d3d3d; display: grid; place-items: center; flex: none; }
.sb > i::before { content: ""; border: 5px solid transparent; border-top-width: 0; border-bottom-color: #b5b5b5; }
.sb > i.dn::before { border-width: 5px 5px 0; border-color: #b5b5b5 transparent transparent; }
.track { flex: 1; padding: 1px 0; background: #2c2c2c; }
.thumb { border: 1px solid #5a5a5a; background: #404040; }
.scatter .thumb { height: 100%; }
.side .track { background: #363636; }
.side .thumb { height: 316px; }

.split { height: 5px; flex: none; padding: 1px 0 0 170px; }
.split i { display: block; width: 20px; height: 2px; background: repeating-linear-gradient(90deg, #888 0 3px, transparent 3px 4px); }
.info { width: 356px; height: 185px; flex: none; background: #202020; padding: 4px 0 0 5px; }
.info h3 { font-size: 15px; line-height: 20px; color: #ffa50a; margin-bottom: 15px; letter-spacing: -.1px; }
.info p { line-height: 16px; margin-bottom: 16px; letter-spacing: -.12px; }
.info a { color: #f0a020; text-decoration: underline; }
.tools { flex: 1; display: flex; overflow: hidden; padding-left: 4px; gap: .5px; }
.tools svg { width: 54px; height: 26px; margin-top: 4px; margin-left: 4px; }
.tools svg:first-child { margin-left: 0; }
.tools .on { border: 1px solid #555; border-radius: 3px; background: #383838; margin-top: 6px; height: 26px; }
.nl { font-size: 12px; fill: #fff; text-anchor: middle; }
.ll { font-size: 10px; fill: #ddd; text-anchor: middle; }

/* scatter controls */
.body { flex: 1; display: flex; min-height: 0; }
.controls { width: 322px; display: flex; flex-direction: column; letter-spacing: -.1px; }
.upper { display: flex; height: 707px; padding-top: 3px; flex: none; }
.form { width: 304px; padding-left: 9px; }
h4 { font-size: 12px; line-height: 16px; font-weight: 400; padding: 7px 0 4px 2px; height: 27px; }
h4.h2 { margin-top: 3px; height: 28px; padding-top: 8px; }
h4.h3 { padding: 6px 0 0 21px; height: 28px; }
.group { width: 290px; border: 1px solid #3c3c3c; border-radius: 3px; padding: 4px 0 0 6px; }
.g1 { height: 119px; }
.g2 { height: 198px; }
.row { display: flex; height: 40px; }
.row label { width: 70px; line-height: 29px; }
.combo { width: 204px; height: 30px; background: #202020; border: 1px solid #282828; border-radius: 3px; display: flex; align-items: center; padding-left: 6px; }
.combo b { width: 17px; height: 17px; border-radius: 3px; font-weight: 500; text-align: center; line-height: 17px; font-size: 13px; margin: 0 5px 0 3px; }
.n { background: #d0021f; }
.c { background: #169a3f; }
.combo span { flex: 1; }
.combo i { width: 25px; height: 28px; background: #404040; border: 1px solid #505050; border-radius: 0 2px 2px 0; display: grid; place-items: center; }
.combo i::before { content: ""; border: 5px solid transparent; border-bottom-width: 0; border-top-color: #b8b8b8; }
.focus { border: 1px solid #4f9bf0 !important; }
.btn { display: flex; align-items: center; justify-content: center; border-radius: 2px; }
.g1 .btn { width: 274px; height: 26px; background: linear-gradient(#505661, #434a52); }
.ck { display: flex; align-items: center; gap: 6px; height: 31.200px; }
.ck i { width: 17px; height: 17px; background: #202020; border: 1px solid #292929; border-radius: 1px; }
.ck i svg { width: 15px; height: 15px; }
.sub { padding-left: 70px; height: 24px; gap: 7px; }
.sliders { padding: 7px 0 0 9px; height: 131px; }
.sl { display: flex; align-items: center; height: 29px; }
.sl label { width: 83px; }
.bar { width: 187px; height: 6px; border: 1px solid #232323; border-radius: 3px; background: #353535; }
.fill { position: relative; height: 4px; background: #4f9bf5; border-radius: 2px 0 0 2px; }
.fill::after { content: ""; position: absolute; right: -8px; top: -6px; width: 15px; height: 15px; background: #484848; border: 1px solid #666; border-radius: 2px; box-shadow: 0 0 0 1px #262626; }
.jit { padding-left: 82px; height: 31px; padding-top: 3px; }
.checks { padding: 7px 0 0 10px; }
.zoom { width: 294px; height: 50px; margin-left: 19px; border: 1px solid #3c3c3c; border-radius: 3px; display: flex; gap: 10px; padding: 4px 0 0 7px; flex: none; }
.zb { width: 35px; height: 35px; border: 1px solid #505050; border-radius: 3px; background: linear-gradient(#444, #3b3b3b); display: grid; place-items: center; }
.zb.dark { background: #353535; }
.zb svg { width: 21px; height: 22px; }
.zb.last { margin-left: 105px; }
.send { display: flex; align-items: center; padding: 10px 0 0 17px; gap: 10px; height: 37px; }
.send .btn { width: 268px; height: 28px; background: linear-gradient(#464646, #3c3c3c); border: 1px solid #525252; color: #929292; }
.status { height: 35px; padding: 11px 0 0 13px; font-size: 14px; }
.status text { fill: #fff; }
.handle { width: 26px; padding: 406px 0 0 6px; }
.plot { position: relative; margin-top: 15px; width: 1057px; height: 805px; background: #202020; box-shadow: 0 0 0 1px #3d3d3d; }
#density { position: absolute; left: 47px; top: 1px; }
#chart { position: absolute; left: 0; top: 0; }
.tick { fill: #fff; font-size: 12px; letter-spacing: -.15px; }
.mid { text-anchor: middle; }
.end { text-anchor: end; }
.r { fill: #000; font-size: 12px; text-anchor: middle; }
.grip { position: absolute; right: 0; bottom: 0; }

/* taskbar */
.taskbar { position: absolute; left: 0; top: 1209px; width: 2117px; height: 55px; border-top: 1px solid #454545; background: linear-gradient(90deg, #202225, #222 25%, #292322 38%, #292222 70%, #242424 85%); display: flex; justify-content: space-between; }
.apps { display: flex; margin-left: -4px; }
.app { width: 55px; height: 54px; display: grid; place-items: center; position: relative; }
.app > svg { width: 30px; height: 30px; margin-top: 3px; }
.app text { font: 700 13px "Open Sans", sans-serif; fill: #fff; text-anchor: middle; }
.app.run::after { content: ""; position: absolute; bottom: 1px; left: 24px; width: 8px; height: 4px; border-radius: 2px; background: #9a9a9a; }
.app em { position: absolute; font-style: normal; color: #0d1f33; }
.c47 { left: 25px; top: 7px; width: 26px; height: 20px; border-radius: 10px; background: #0a8ffb; font-size: 13.500px; line-height: 20px; text-align: center; }
.env { left: 28px; top: 7px; width: 20px; height: 20px; border-radius: 10px; background: #5cc4f7; display: grid; place-items: center; }
.env svg { width: 12px; height: 10px; }
.new { left: 21px; top: 34px; height: 10px; width: 21px; border-radius: 3px; background: #22e0e0; font-size: 8px; line-height: 10px; font-weight: 800; text-align: center; }
.tg { background: #482829; border-radius: 6px; width: 50px; margin: 4px 2px 0 3px; height: 50px; }
.tg > svg { margin-top: -2px; }
.app.tg::after { left: 21px; background: #ff99a4; }
.c17 { left: 28px; top: 10px; width: 18px; height: 14px; border-radius: 3px; background: #f0383f; color: #fff !important; font-size: 11px; line-height: 14px; text-align: center; letter-spacing: -.5px; }
.cur { background: #323031; border: 1px solid #403e3e; border-radius: 6px; width: 44px; margin: 4px 5px 0 5px; height: 50px; box-shadow: 6px 0 0 -1px #2f2c2c; }
.cur > svg { margin-top: -2px; }
.app.cur::after { left: 14px; width: 19px; bottom: 0; background: #1190fb; }
.tray { display: flex; align-items: center; gap: 10px; padding: 3px 11px 0 0; }
.chev { margin-right: 13px; }
.clock { text-align: right; font-size: 14.500px; line-height: 20px; width: 83px; margin-right: 3px; }
```
FILE: chart.js
```js
const C = { b: [70, 190, 250], r: [237, 70, 47], g: [170, 240, 43] };

// x, y, number of overlapping observations
const P = {
  b: [[1277,412],[1217,454],[1186,479],[1217,500],[1277,523,2],[1217,544],[1248,542],[1247,547],[1277,547],[1279,567],[1217,568,2],[1218,589,2],[1217,612,3],[1245,611,2],[1336,612],[1215,635,5],[1247,635],[1275,635,2],[1216,656],[1309,656],[1217,678,5],[1187,701,3],[1217,701,2],[1188,725,3],[1218,724,3],[1245,723],[1214,744],[1247,878]],
  g: [[1753,546],[1810,546],[1900,587],[1843,634],[1873,634],[1782,655],[1898,656,2],[1752,677],[1694,679],[1842,678,3],[1690,701],[1781,702],[1842,700],[1869,699],[1692,723,5],[1634,723],[1754,725],[1783,723,3],[1812,723],[1842,722,2],[1691,747,2],[1692,768],[1722,766],[1750,766],[1753,768],[1780,769],[1811,768],[1870,769],[1695,791],[1723,790,3],[1573,811],[1844,811],[1661,835],[1694,835],[1722,835],[1753,835],[1604,768],[1601,902]],
  r: [[1573,677],[1573,702],[1544,722],[1513,723],[1573,722,2],[1543,745,4],[1573,746],[1544,768,3],[1515,769],[1573,768],[1455,790],[1514,790],[1544,790],[1573,790],[1455,812],[1514,812,2],[1486,833,3],[1542,836],[1455,856,3],[1485,856],[1457,878],[1544,879,2],[1454,903],[1455,946],[1632,634],[1632,658],[1603,680],[1601,700,2],[1603,722,4],[1605,746],[1604,768],[1636,790],[1663,723],[1690,680],[1603,832],[1601,902]]
};

// decision boundaries between the classes
const left = [[1592,369],[1592,450],[1588,465],[1519,517],[1470,563],[1398,687],[1364,747],[1326,807],[1315,817],[1305,847],[1300,890],[1288,913],[1257,940],[1205,980],[1154,1030],[1097,1097]];
const right = [[1592,369],[1594,470],[1627,537],[1645,563],[1674,598],[1679,613],[1679,650],[1667,677],[1654,710],[1648,733],[1652,780],[1648,807],[1640,823],[1640,857],[1659,897],[1693,953],[1734,1030],[1777,1124]];
function edge(line, y) {
  for (let i = 1; i < line.length; i++) {
    const [x0, y0] = line[i - 1], [x1, y1] = line[i];
    if (y <= y1) return x0 + (x1 - x0) * (y - y0) / (y1 - y0);
  }
  return 1090;
}

const ctx = document.getElementById("density").getContext("2d");
const S = 4;
for (let y = 369; y < 1124; y += S) {
  const l = edge(left, y), r = edge(right, y);
  for (let x = 1097; x < 2105; x += S) {
    const k = x < l ? "b" : x < r ? "r" : "g";
    const w = {};
    let all = 0;
    for (const c in P) {
      w[c] = 0;
      for (const [px, py, n = 1] of P[c]) w[c] += n / ((px - x) ** 2 + (py - y) ** 2 + 400);
      all += w[c];
    }
    const base = k === "b" ? 0.46 : 0.40;
    const a = 0.37 * Math.max(k === "b" ? 0.03 : 0.06, (w[k] / all - base) / (1 - base));
    ctx.fillStyle = `rgb(${C[k].map(v => Math.round(33 + (v - 33) * a)).join()})`;
    ctx.fillRect(x - 1097, y - 369, S, S);
  }
}

let s = '<clipPath id="area"><rect x="1097" y="369" width="1008" height="755"/></clipPath>';
for (const c of ["b", "g", "r"]) {
  const col = `rgb(${C[c].join()})`;
  for (const [x, y, n = 1] of P[c])
    for (let i = 0; i < n; i++) {
      const dx = n > 1 ? Math.cos(i * 2.4) * 1.3 : 0, dy = n > 1 ? Math.sin(i * 2.4) * .8 : 0;
      s += `<circle cx="${x + dx}" cy="${y + dy}" r="10.500" fill="${col}" fill-opacity=".25" stroke="${col}" stroke-opacity=".18" stroke-width="1.500"/>`;
    }
}
s += `<g clip-path="url(#area)" fill="none" stroke-width="3"><path d="M1097 648L2105 801" stroke="#505050"/><path d="M1097 729L1582 369" stroke="#3590bd"/><path d="M1109 1124L2066 369" stroke="#b23524"/><path d="M1097 1042L2105 566" stroke="#80b320"/></g>`;
for (const [t, x, y, a] of [["r = 0.28", 1517, 436, -36], ["r = 0.66", 1932, 497, -38], ["r = 0.54", 1950, 629, -25], ["r = -0.36", 1950, 795, 8.5]])
  s += `<text class="r" transform="translate(${x} ${y}) rotate(${a})">${t}</text>`;

// legend
s += `<rect x="1989.500" y="1026.500" width="115" height="98" rx="3" fill="#30332c" fill-opacity=".9" stroke="#4b4d47"/>`;
[["b", "Iris-setosa", 1047], ["r", "Iris-versicolor", 1076], ["g", "Iris-virginica", 1104.5]].forEach(([c, t, y]) => {
  const col = `rgb(${C[c].map(v => Math.round(v * .8)).join()})`;
  s += `<circle cx="2005" cy="${y}" r="6.300" fill="${col}" fill-opacity=".35" stroke="${col}" stroke-width="1.500"/><text class="tick" x="2019" y="${y + 3}">${t}</text>`;
});

// axes
s += `<path d="M1096.500 369V1124.500H2105" fill="none" stroke="#fff"/>`;
for (let i = 0; i <= 15; i++) {
  const x = 1157.8 + i * 59.44, major = i % 10 === 0;
  s += `<path d="M${x} 1124v${major ? -6 : -3}" stroke="${major ? "#fff" : "#888"}" stroke-width="1.300"/><text class="tick mid" x="${x}" y="1140">${+(i * .2).toFixed(1)}</text>`;
}
for (let i = 7; i <= 22; i++) {
  const y = 1391.3 - i * 44.53, major = i % 10 === 0;
  s += `<path d="M1097 ${y}h${major ? 7 : 3}" stroke="${major ? "#fff" : "#888"}" stroke-width="1.300"/><text class="tick end" x="1090.500" y="${y + 4.5}">${+(i * .2).toFixed(1)}</text>`;
}
s += `<text class="tick mid" x="1595" y="1167">petal width</text><text class="tick mid" transform="translate(1063 749) rotate(-90)">sepal width</text>`;
document.getElementById("chart").innerHTML = s;

// heat map icon
const heat = [
  [110,100,80,35,140,210],[70,50,150,110,190,170],[35,25,100,120,40,150],[140,60,110,70,30,130],[150,50,100,160,110,90],[110,170,90,130,140,50]
];
document.getElementById("heat").innerHTML = heat.map((row, j) => row.map((v, i) =>
  `<rect x="${9 + i * 6.4}" y="${9 + j * 6.2}" width="6.500" height="6.300" fill="rgb(${v},${v},${v})"/>`).join("")).join("");
```
